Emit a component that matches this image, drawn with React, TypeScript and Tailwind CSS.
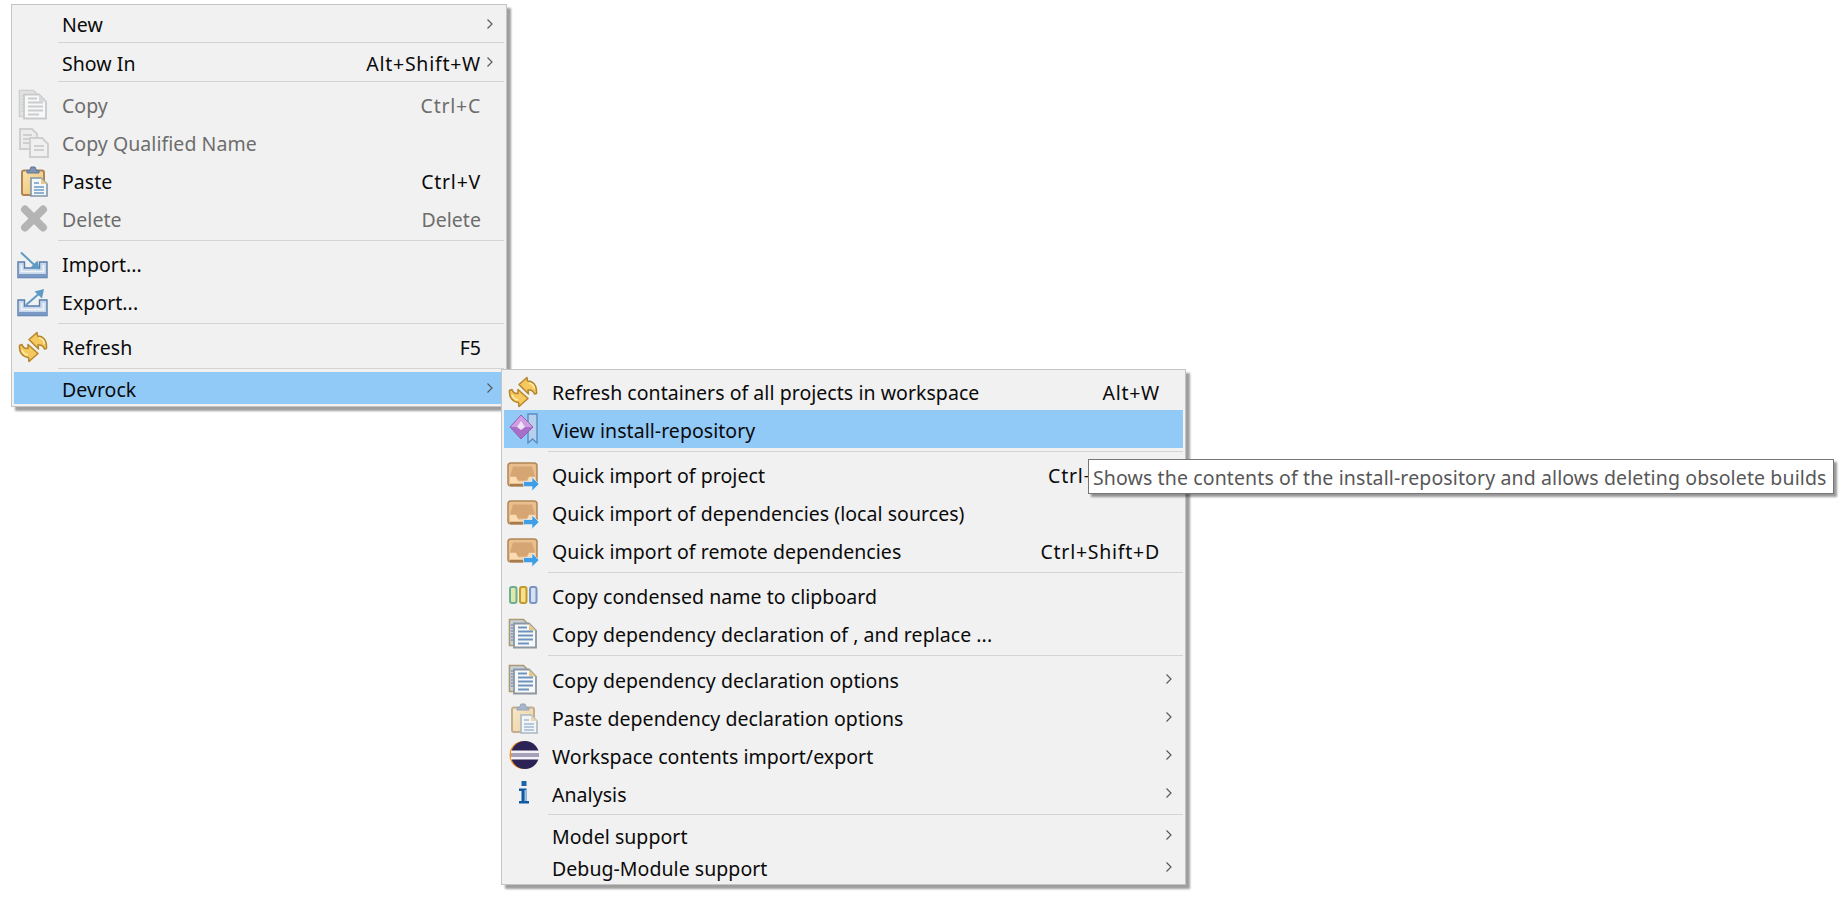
import React from "react";

type IconProps = { children: React.ReactNode };
const Svg = ({ children }: IconProps) => (
  <svg width="32" height="32" viewBox="0 0 32 32" className="shrink-0 overflow-visible">
    {children}
  </svg>
);

const CopyIcon = ({ gray = false }: { gray?: boolean }) => {
  const edge = gray ? "#c9c9c9" : "#8d97a0";
  const back = gray ? "#e4e4e4" : "#c6d2de";
  const backEdge = gray ? "#cfcfcf" : "#ad9a72";
  const line = gray ? "#cbcbcb" : "#6e93bd";
  const fold = gray ? "#d8d8d8" : "#e8c987";
  return (
    <Svg>
      <path d="M2.5 2.5h14l3 3v23h-17z" fill={back} stroke={backEdge} strokeWidth="1.6" />
      <path d="M4 8h4M4 11h4M4 14h4M4 17h4M4 20h4M4 23h4" stroke={gray ? "#d4d4d4" : "#7f9cba"} strokeWidth="1.4" />
      <path d="M7 6.5h15l7 7v17H7z" fill="#f6f8fa" stroke={edge} strokeWidth="1.8" />
      <path d="M22 6.5v7h7z" fill={fold} />
      <path d="M11 10.5h9M11 14.5h15M11 18.5h15M11 22.5h15M11 26.5h11" stroke={line} strokeWidth="1.8" />
    </Svg>
  );
};

const CopyQualifiedIcon = () => (
  <Svg>
    <path d="M3 3h12l5 5v15H3z" fill="#ececec" stroke="#cfcfcf" strokeWidth="2" />
    <path d="M6 9h9M6 13h9M6 17h9" stroke="#cfcfcf" strokeWidth="2" />
    <path d="M13 12h12l6 6v13H13z" fill="#f0f0f0" stroke="#cfcfcf" strokeWidth="2" />
    <path d="M17 20h10M17 24h10" stroke="#cfcfcf" strokeWidth="2" />
  </Svg>
);

const PasteIcon = ({ faded = false }: { faded?: boolean }) => (
  <Svg>
    <g opacity={faded ? 0.62 : 1}>
      <defs>
        <linearGradient id={faded ? "pbf" : "pb"} x1="0" y1="0" x2="1" y2="1">
          <stop offset="0" stopColor="#f9e3ae" />
          <stop offset="1" stopColor="#eebf6f" />
        </linearGradient>
      </defs>
      <rect x="5" y="6.5" width="22" height="24.5" rx="2" fill={`url(#${faded ? "pbf" : "pb"})`} stroke="#ad8557" strokeWidth="2" />
      <path d="M10 9V6.5h2.5L14 3h4l1.5 3.5H22V9z" fill="#7d93b5" stroke="#5f7596" strokeWidth="1" />
      <path d="M14 14h10l6 6v12H14z" fill="#f4f7fa" stroke="#7f97a8" strokeWidth="1.6" />
      <path d="M24 14v6h6z" fill="#e8c987" />
      <path d="M17 19h5M17 23h10M17 26h10M17 29h10" stroke="#6e9ac4" strokeWidth="1.6" />
    </g>
  </Svg>
);

const DeleteIcon = () => (
  <Svg>
    <path d="M8 7.500 L26 25.500 M26 7.500 L8 25.500" stroke="#b4b4b4" strokeWidth="8" strokeLinecap="round" />
  </Svg>
);

const TrayBase = () => (
  <>
    <path d="M1 15h6.500v6h15v-6H30v15.500H1z" fill="#c9d8ea" stroke="#5a7cad" strokeWidth="1.4" />
    <path d="M4.500 18v6.500h22V18" fill="none" stroke="#f1f5fa" strokeWidth="1.500" />
    <path d="M1 27h29v3.500H1z" fill="#7a98c4" />
  </>
);

const ImportIcon = () => (
  <Svg>
    <TrayBase />
    <path d="M4 5.500 L19 19.500" stroke="#5d9bc4" strokeWidth="2" />
    <path d="M22.500 22.500l-9-2 7-7z" fill="#5d9bc4" />
  </Svg>
);

const ExportIcon = () => (
  <Svg>
    <TrayBase />
    <path d="M9 20 L24 7" stroke="#5d9bc4" strokeWidth="2" />
    <path d="M27 4l-2 9.500-7.500-7z" fill="#5d9bc4" />
  </Svg>
);

const RefreshIcon = () => (
  <Svg>
    <path
      d="M12 9.500 L20 2.500 L20.500 6 C26 6 30 10 29.500 18.500 L27.500 19 C26.500 16 24 14.500 21 15 L21.500 19 Z"
      fill="#f6c95f"
      stroke="#b5852b"
      strokeWidth="1.500"
      strokeLinejoin="round"
    />
    <path
      d="M21 23.500 L12 31.500 L11.500 27.500 C6 27 2 23 2.500 15.500 L5 14.500 C6 17.500 8 19 11 18.500 L11 14.500 Z"
      fill="#f6c95f"
      stroke="#b5852b"
      strokeWidth="1.500"
      strokeLinejoin="round"
    />
    <path d="M22 8 C25 8.500 27 10.500 27.500 14" fill="none" stroke="#fdeeb5" strokeWidth="1.500" />
    <path d="M5 20 C6 22.500 8 24.500 11 25" fill="none" stroke="#fdeeb5" strokeWidth="1.500" />
  </Svg>
);

const ViewRepoIcon = () => (
  <Svg>
    <path d="M21 1h9v29l-4.500-4-4.500 4z" fill="#b5cfec" stroke="#5b8cc4" strokeWidth="1.400" />
    <path d="M14 2L26 14 14 26 3 14z" fill="#a86fc8" />
    <path d="M14 2L26 14H3z" fill="#cf9ee2" />
    <path d="M14 8l4 6-4 3-4-3z" fill="#f0e2f8" />
    <path d="M14 2L26 14 14 26 3 14z" fill="none" stroke="#9560b5" strokeWidth="1" />
  </Svg>
);

const QuickImportIcon = () => (
  <Svg>
    <rect x="1" y="5" width="29" height="23" rx="3" fill="#eabf8f" stroke="#b08655" strokeWidth="1.500" />
    <path d="M6 8.500h19l3 10H22l-2 4H11l-2-4H3z" fill="#d6a574" />
    <path d="M3 19h6l2 4.500h9l2-4.500h6.500v6H3z" fill="#f9dcb4" />
    <path d="M3 27h27" stroke="#a87b4e" strokeWidth="2" />
    <path d="M16.500 23.500h8.500v-4.500l7 7-7 7v-4.500h-8.500z" fill="#3f9ee6" stroke="#dbeaf6" strokeWidth="0.800" />
  </Svg>
);

const CondensedIcon = () => (
  <Svg>
    <rect x="3" y="8" width="6.500" height="16" rx="2" fill="#dce9a8" stroke="#6cae93" strokeWidth="2" />
    <rect x="13" y="8" width="6.500" height="16" rx="2" fill="#f9e08c" stroke="#c19a2a" strokeWidth="2" />
    <rect x="23" y="8" width="6.500" height="16" rx="2" fill="#d6e2f2" stroke="#7694c4" strokeWidth="2" />
  </Svg>
);

const EclipseIcon = () => (
  <Svg>
    <circle cx="16.500" cy="16" r="14" fill="#f7941e" />
    <circle cx="18" cy="16" r="14" fill="#2c2255" />
    <rect x="4" y="11.500" width="28" height="2.500" fill="#f4f2f6" />
    <rect x="4" y="14" width="28" height="4" fill="#a6a0b8" />
    <rect x="4" y="18" width="28" height="2.500" fill="#f4f2f6" />
  </Svg>
);

const InfoIcon = () => (
  <Svg>
    <rect x="14.500" y="4" width="5" height="5" fill="#1b64a8" />
    <path d="M12 11.500h7.500V24H22v2.500H12V24h2.500v-10H12z" fill="#0f5aa2" />
    <path d="M17.500 13v11h2v-11z" fill="#9cc3e4" />
  </Svg>
);

const Chevron = () => (
  <svg width="8" height="12" viewBox="0 0 8 12" className="shrink-0">
    <path d="M1.500 1.500 L6 6 L1.500 10.500" fill="none" stroke="#5a5a5a" strokeWidth="1.200" />
  </svg>
);

type RowProps = {
  label: string;
  icon?: React.ReactNode;
  shortcut?: string;
  sub?: boolean;
  disabled?: boolean;
  active?: boolean;
  size?: string;
};

const Row = ({ label, icon, shortcut, sub, disabled, active, size = "h-[38px]" }: RowProps) => (
  <div
    className={`mx-[2px] flex items-center pl-[3px] ${size} ${active ? "bg-[#91c9f7]" : ""} ${
      disabled ? "text-[#6d6d6d]" : "text-[#0a0a0a]"
    }`}
  >
    <div className="w-[32px] h-[32px] shrink-0">{icon}</div>
    <span className="ml-[13px] flex-1 whitespace-nowrap pt-[3px]">{label}</span>
    {shortcut ? (
      <span className={`whitespace-nowrap pt-[3px] ${shortcut.includes("+") ? "tracking-[0.75px]" : ""}`}>{shortcut}</span>
    ) : null}
    <div className="w-[23px] shrink-0 flex justify-end pr-[10px]">{sub ? <Chevron /> : null}</div>
  </div>
);

const Sep = ({ margin = "mt-[3px] mb-[3px]" }: { margin?: string }) => (
  <div className={`ml-[46px] mr-[2px] h-[1px] bg-[#d4d4d4] ${margin}`} />
);

const menuClass =
  "bg-[#f1f1f1] border border-[#c4c4c4] shadow-[4px_4px_2px_rgba(0,0,0,0.38)] text-[19.5px] tracking-[0.05px]";

export default function App() {
  return (
    <div
      className="relative w-[1842px] h-[897px] overflow-hidden bg-white pt-[4px] pl-[11px]"
      style={{ fontFamily: '"Noto Sans", "Open Sans", sans-serif' }}
    >
      <div className={`${menuClass} w-[496px] pb-[2px]`}>
        <Row label="New" sub size="h-[37px]" />
        <Sep margin="" />
        <Row label="Show In" shortcut="Alt+Shift+W" sub />
        <Sep margin="mb-[3px]" />
        <Row label="Copy" shortcut="Ctrl+C" disabled icon={<CopyIcon gray />} />
        <Row label="Copy Qualified Name" disabled icon={<CopyQualifiedIcon />} />
        <Row label="Paste" shortcut="Ctrl+V" icon={<PasteIcon />} />
        <Row label="Delete" shortcut="Delete" disabled icon={<DeleteIcon />} />
        <Sep />
        <Row label="Import..." icon={<ImportIcon />} />
        <Row label="Export..." icon={<ExportIcon />} />
        <Sep />
        <Row label="Refresh" shortcut="F5" icon={<RefreshIcon />} />
        <Sep />
        <Row label="Devrock" sub active size="h-[32px]" />
      </div>

      <div className={`${menuClass} absolute left-[501px] top-[369px] w-[685px] pt-[2px] pb-[1px]`}>
        <Row label="Refresh containers of all projects in workspace" shortcut="Alt+W" icon={<RefreshIcon />} />
        <Row label="View install-repository" active icon={<ViewRepoIcon />} />
        <Sep />
        <Row label="Quick import of project" shortcut="Ctrl+Shift+I" icon={<QuickImportIcon />} />
        <Row label="Quick import of dependencies (local sources)" icon={<QuickImportIcon />} />
        <Row label="Quick import of remote dependencies" shortcut="Ctrl+Shift+D" icon={<QuickImportIcon />} />
        <Sep />
        <Row label="Copy condensed name to clipboard" icon={<CondensedIcon />} />
        <Row label="Copy dependency declaration of , and replace ..." icon={<CopyIcon />} />
        <Sep margin="mt-[3px] mb-[4px]" />
        <Row label="Copy dependency declaration options" sub icon={<CopyIcon />} />
        <Row label="Paste dependency declaration options" sub icon={<PasteIcon faded />} />
        <Row label="Workspace contents import/export" sub icon={<EclipseIcon />} />
        <Row label="Analysis" sub icon={<InfoIcon />} />
        <Sep margin="mt-[2px] mb-[4px]" />
        <Row label="Model support" sub size="h-[32px]" />
        <Row label="Debug-Module support" sub size="h-[32px]" />
      </div>

      <div className="absolute left-[1088px] top-[459px] w-[746px] h-[35px] bg-white border border-[#767676] shadow-[3px_3px_2px_rgba(0,0,0,0.4)] flex items-center pl-[4px] pt-[2px] text-[19.5px] tracking-[0.12px] text-[#575757] whitespace-nowrap">
        Shows the contents of the install-repository and allows deleting obsolete builds
      </div>
    </div>
  );
}
